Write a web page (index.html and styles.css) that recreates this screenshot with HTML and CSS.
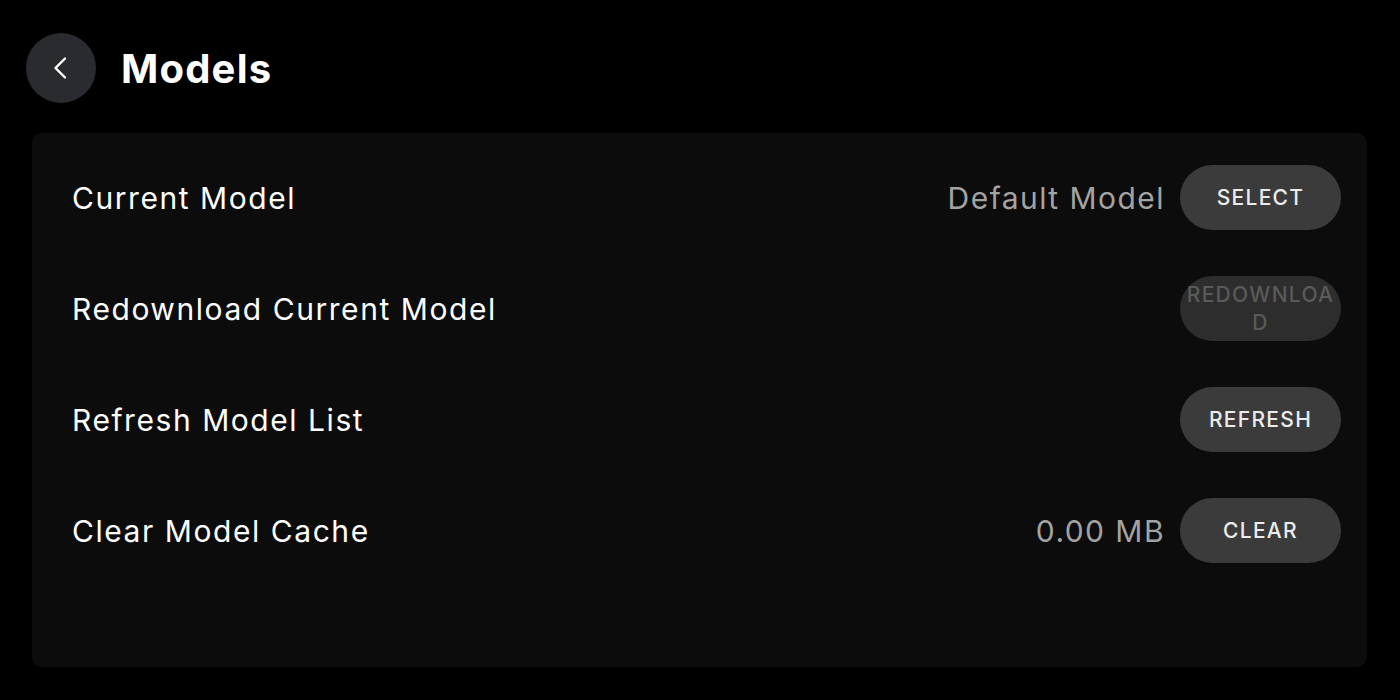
FILE: index.html
```html
<!DOCTYPE html>
<html>
<head>
<meta charset="utf-8">
<link rel="stylesheet" href="styles.css">
</head>
<body>
<div class="page">
  <header class="header">
    <button class="back" aria-label="Back">
      <svg width="24" height="24" viewBox="0 0 24 24"><path d="M16 2.5 L6.5 12 L16 21.5" fill="none" stroke="#ffffff" stroke-width="2.4" stroke-linecap="round" stroke-linejoin="round"/></svg>
    </button>
    <h1 class="title">Models</h1>
  </header>
  <section class="panel">
    <div class="row">
      <span class="label">Current Model</span>
      <div class="right">
        <span class="value">Default Model</span>
        <button class="btn">SELECT</button>
      </div>
    </div>
    <div class="row">
      <span class="label">Redownload Current Model</span>
      <div class="right">
        <button class="btn disabled">REDOWNLOAD</button>
      </div>
    </div>
    <div class="row">
      <span class="label">Refresh Model List</span>
      <div class="right">
        <button class="btn">REFRESH</button>
      </div>
    </div>
    <div class="row">
      <span class="label">Clear Model Cache</span>
      <div class="right">
        <span class="value">0.00 MB</span>
        <button class="btn">CLEAR</button>
      </div>
    </div>
  </section>
</div>
</body>
</html>
```

FILE: styles.css
```css
* { box-sizing: border-box; }
html, body {
  margin: 0;
  padding: 0;
  background: #000000;
  font-family: Inter, "Noto Sans", sans-serif;
  color: #ffffff;
}
.page {
  width: 1400px;
  height: 700px;
  padding: 33px 33px 0 26px;
}
.header {
  display: flex;
  align-items: center;
  gap: 25px;
  height: 70px;
}
.back {
  width: 70px;
  height: 70px;
  border-radius: 50%;
  border: none;
  background: #2a2b2e;
  display: flex;
  align-items: center;
  justify-content: center;
  padding: 0;
}
.title {
  margin: 0;
  font-size: 40px;
  font-weight: 700;
  letter-spacing: 1.2px;
}
.panel {
  margin: 30px 0 0 6px;
  width: 1335px;
  height: 534px;
  background: #0c0c0c;
  border-radius: 10px;
  padding: 9px 26px 0 40px;
}
.row {
  height: 111px;
  display: flex;
  align-items: center;
  justify-content: space-between;
}
.label {
  font-size: 30px;
  color: #ffffff;
  letter-spacing: 1.55px;
}
.right {
  display: flex;
  align-items: center;
  gap: 15px;
}
.value {
  font-size: 30px;
  color: #a3a3a3;
  letter-spacing: 1.45px;
}
.btn {
  width: 161px;
  height: 65px;
  border-radius: 33px;
  border: none;
  background: #3b3b3b;
  color: #ececec;
  font-family: Inter, "Noto Sans", sans-serif;
  font-size: 21px;
  font-weight: 500;
  line-height: 28px;
  padding: 0 4px;
  letter-spacing: 1.3px;
}
.btn.disabled {
  background: #2d2d2d;
  color: #5a5a5a;
  word-break: break-all;
}
```
